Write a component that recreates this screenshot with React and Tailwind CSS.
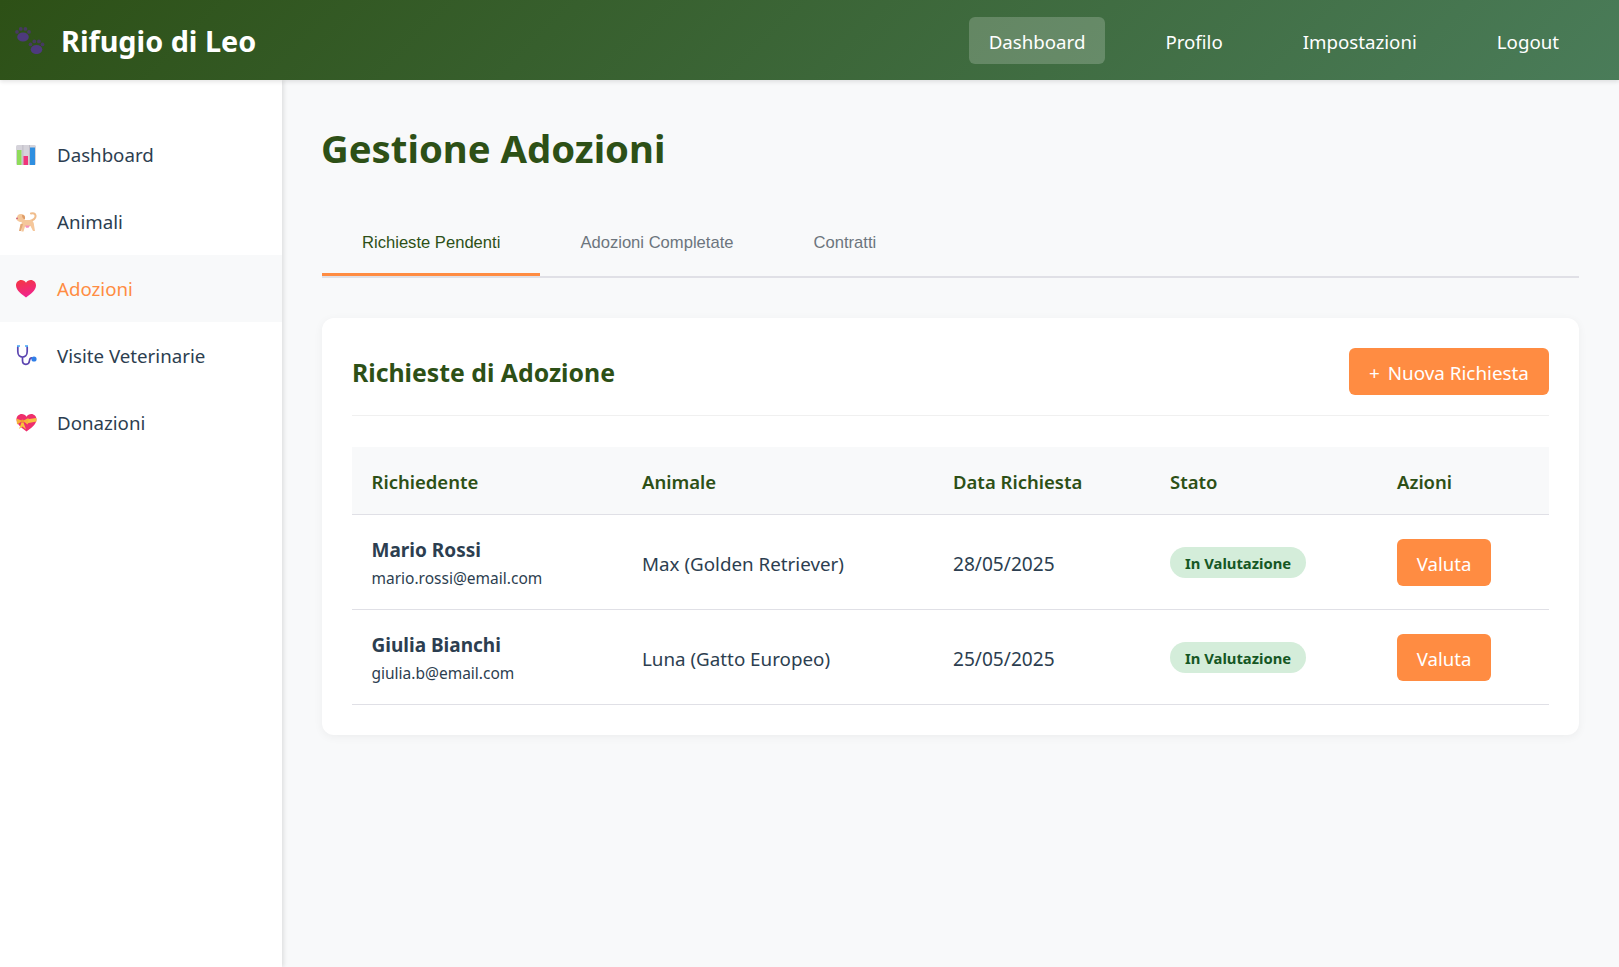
const navLinks = ["Dashboard", "Profilo", "Impostazioni", "Logout"];

const requests = [
  { name: "Mario Rossi", email: "mario.rossi@email.com", animal: "Max (Golden Retriever)", date: "28/05/2025" },
  { name: "Giulia Bianchi", email: "giulia.b@email.com", animal: "Luna (Gatto Europeo)", date: "25/05/2025" },
];

function PawIcon() {
  const paw = (x, y) => (
    <g transform={`translate(${x} ${y})`}>
      <ellipse cx="8" cy="10.5" rx="5.8" ry="4.6" fill="#4d3a7d" />
      <circle cx="2" cy="5.4" r="1.9" fill="#463a60" />
      <circle cx="5.8" cy="2.4" r="1.9" fill="#463a60" />
      <circle cx="10.4" cy="2.4" r="1.9" fill="#463a60" />
      <circle cx="14" cy="5.4" r="1.9" fill="#463a60" />
    </g>
  );
  return (
    <svg width="30" height="28" viewBox="0 0 30 28">
      {paw(0, 0.5)}
      {paw(13.5, 13)}
    </svg>
  );
}

function ChartIcon() {
  return (
    <svg width="20" height="20" viewBox="0 0 20 20">
      <rect width="20" height="20" rx="1.5" fill="#d5d3da" />
      <rect x="6.5" width="0.8" height="20" fill="#b9b6c0" />
      <rect x="13" width="0.8" height="20" fill="#b9b6c0" />
      <rect x="1" y="5" width="4.5" height="15" fill="#8fdc5a" />
      <rect x="7.5" y="11" width="4.5" height="9" fill="#f0347a" />
      <rect x="14" y="2.5" width="5" height="17.5" fill="#2f8fe0" />
    </svg>
  );
}

function DogIcon() {
  return (
    <svg width="21" height="20" viewBox="0 0 21 20" fill="none">
      <path d="M14 9 C17 8 20 7 19.5 3.5 C19.2 1.5 17 0.8 15 1.5" stroke="#f0bd8c" strokeWidth="2" strokeLinecap="round" />
      <path d="M6 8 H15 C17 8.5 18 11 18 13 L19 19 H17 L14.5 14 L9 14.5 L7.5 19.5 H5.5 L5.5 12 Z" fill="#f5c79b" />
      <path d="M3 19 L4.5 12 L7 12 L5 19 Z" fill="#e3a877" />
      <circle cx="5" cy="6" r="4" fill="#f5c79b" />
      <path d="M0.5 7 C0.5 5.5 2 5 3 5.5 L3.5 8.5 C2 9 0.5 8.5 0.5 7 Z" fill="#f5c79b" />
      <path d="M6 3 C8 2.5 9.5 4 9 7 C7.5 7.5 6 6 6 3 Z" fill="#dd9c68" />
      <circle cx="1" cy="6.3" r="0.9" fill="#c9587a" />
      <path d="M9 13.5 H14 L12.5 15.8 H10 Z" fill="#f58fb8" />
    </svg>
  );
}

function HeartIcon() {
  return (
    <svg width="20" height="18" viewBox="0 0 20 18">
      <defs>
        <linearGradient id="heartFill" x1="0" y1="0" x2="0.3" y2="1">
          <stop offset="0" stopColor="#f4373f" />
          <stop offset="1" stopColor="#f0248c" />
        </linearGradient>
      </defs>
      <path d="M10 17.5 C6 14.5 0 10.5 0 5.5 C0 2.3 2.4 0 5.2 0 C7.2 0 9 1 10 2.8 C11 1 12.8 0 14.8 0 C17.6 0 20 2.3 20 5.5 C20 10.5 14 14.5 10 17.5 Z" fill="url(#heartFill)" />
    </svg>
  );
}

function StethoscopeIcon() {
  return (
    <svg width="21" height="21" viewBox="0 0 21 21" fill="none">
      <path d="M1.8 2 V6.5 C1.8 10 4 12 6.5 12 C9 12 11.2 10 11.2 6.5 V2" stroke="#5b45b0" strokeWidth="1.7" />
      <path d="M6.5 12 V15.5 C6.5 20.5 13 20.5 13.4 16 C13.7 13.2 15 12.5 16.5 13" stroke="#5b45b0" strokeWidth="1.7" />
      <path d="M1.8 2 V1 H4 M11.2 2 V1 H9" stroke="#45a5f5" strokeWidth="1.6" />
      <circle cx="18" cy="14" r="2.6" fill="#2f7fe8" />
    </svg>
  );
}

function GiftHeartIcon() {
  return (
    <svg width="21" height="18" viewBox="0 0 21 18">
      <path d="M10.5 17.5 C6.5 14.5 0.5 10.5 0.5 5.5 C0.5 2.3 2.9 0 5.7 0 C7.7 0 9.5 1 10.5 2.8 C11.5 1 13.3 0 15.3 0 C18.1 0 20.5 2.3 20.5 5.5 C20.5 10.5 14.5 14.5 10.5 17.5 Z" fill="#ee2f6c" />
      <path d="M10 5.5 L20.3 4 L20.5 7.5 L10 9.5 Z" fill="#f8c13e" />
      <path d="M0.5 4.5 L6.5 7 L1 10.5 Z M12.5 4 L6.5 7 L12 10.5 Z" fill="#f6b23a" />
      <path d="M5.5 8.5 L3 15 L6.5 12.5 L10 15.5 L7.5 8.5 Z" fill="#f8c13e" />
      <circle cx="6.5" cy="7.2" r="1.6" fill="#f39a2e" />
    </svg>
  );
}

const sideLinks = [
  { label: "Dashboard", icon: <ChartIcon /> },
  { label: "Animali", icon: <DogIcon /> },
  { label: "Adozioni", icon: <HeartIcon />, active: true },
  { label: "Visite Veterinarie", icon: <StethoscopeIcon /> },
  { label: "Donazioni", icon: <GiftHeartIcon /> },
];

export default function App() {
  return (
    <div className="flex h-[967px] flex-col overflow-hidden bg-[#f8f9fa] font-['Noto_Sans',sans-serif] text-[#2c3e50]">
      <header className="z-20 flex h-[80px] shrink-0 items-center justify-between bg-[linear-gradient(135deg,#2d5016,#4a7c59)] pl-[15px] pr-10 shadow-[0_2px_4px_rgba(0,0,0,0.1)]">
        <div className="flex items-center gap-[16px] text-[28.8px] leading-none font-bold text-white">
          <PawIcon />
          <span className="pt-0.5">Rifugio di Leo</span>
        </div>
        <nav className="flex items-center gap-10">
          {navLinks.map((link, i) => (
            <a
              key={link}
              className={`rounded-md px-5 pt-3 pb-2.5 text-[18.7px] leading-[25px] text-white ${i === 0 ? "bg-white/20" : ""}`}
            >
              {link}
            </a>
          ))}
        </nav>
      </header>

      <div className="flex min-h-0 flex-1">
        <aside className="z-10 w-[282px] shrink-0 bg-white pt-[41px] shadow-[2px_0_4px_rgba(0,0,0,0.1)]">
          {sideLinks.map(({ label, icon, active }) => (
            <a
              key={label}
              className={`flex h-[67px] items-center gap-5 pl-[15px] text-[18.7px] ${active ? "bg-[#f8f9fa] text-[#ff8c42]" : ""}`}
            >
              <span className="flex w-[22px] justify-center">{icon}</span>
              <span className="pt-0.5">{label}</span>
            </a>
          ))}
        </aside>

        <main className="min-w-0 flex-1 px-10 pt-10">
          <h1 className="-ml-px mb-10 pt-0.5 text-[38.3px] leading-[52px] font-bold text-[#2d5016]">Gestione Adozioni</h1>

          <div className="mb-10 flex border-b-2 border-[#e0e0e6] pt-px font-['Liberation_Sans',sans-serif] text-[16.6px] leading-[20px]">
            <button className="border-b-[3px] border-[#ff8c42] px-10 pt-[18px] pb-5 text-[#2d5016]">Richieste Pendenti</button>
            <button className="border-b-[3px] border-transparent px-10 pt-[18px] pb-5 text-[#6c757d]">Adozioni Completate</button>
            <button className="border-b-[3px] border-transparent px-10 pt-[18px] pb-5 text-[#6c757d]">Contratti</button>
          </div>

          <section className="rounded-xl bg-white p-[30px] shadow-[0_2px_10px_rgba(0,0,0,0.05)]">
            <div className="mb-[31px] flex items-center justify-between border-b border-[#f0f0f0] pb-5">
              <h2 className="text-[24.8px] leading-[34px] font-bold text-[#2d5016]">Richieste di Adozione</h2>
              <button className="h-[47px] w-[200px] rounded-md bg-[#ff8c42] pt-[3px] text-[18.85px] text-white">
                <span className="mr-[3px]">+</span> Nuova Richiesta
              </button>
            </div>

            <table className="w-full border-collapse text-left text-[18.8px]">
              <thead>
                <tr className="h-[67px] border-b border-[#e0e0e6] bg-[#f8f9fa] text-[18.5px] text-[#2d5016]">
                  <th className="w-[270px] pt-1 pl-[19.5px] font-semibold">Richiedente</th>
                  <th className="w-[311px] pt-1 pl-5 font-semibold">Animale</th>
                  <th className="w-[217px] pt-1 pl-5 font-semibold">Data Richiesta</th>
                  <th className="w-[227px] pt-1 pl-5 font-semibold">Stato</th>
                  <th className="pt-1 pl-5 font-semibold">Azioni</th>
                </tr>
              </thead>
              <tbody>
                {requests.map((r) => (
                  <tr key={r.name} className="h-[95px] border-b border-[#e0e0e6]">
                    <td className="pt-1 pl-[19.5px]">
                      <div className="text-[19px] leading-[26px] font-bold">{r.name}</div>
                      <div className="pt-[3px] text-[15.5px] leading-[24px]">{r.email}</div>
                    </td>
                    <td className="pt-[5px] pl-5">{r.animal}</td>
                    <td className="pt-[5px] pl-5 text-[19.1px]">{r.date}</td>
                    <td className="pt-px pl-5">
                      <span className="inline-block rounded-[20px] bg-[#d4edda] px-[15px] pt-[6px] pb-[5px] text-[14.8px] leading-[20px] font-bold text-[#155724]">In Valutazione</span>
                    </td>
                    <td className="pt-px pl-5">
                      <button className="h-[47px] w-[94px] rounded-md bg-[#ff8c42] pt-[3px] text-[18.6px] text-white">Valuta</button>
                    </td>
                  </tr>
                ))}
              </tbody>
            </table>
          </section>
        </main>
      </div>
    </div>
  );
}
